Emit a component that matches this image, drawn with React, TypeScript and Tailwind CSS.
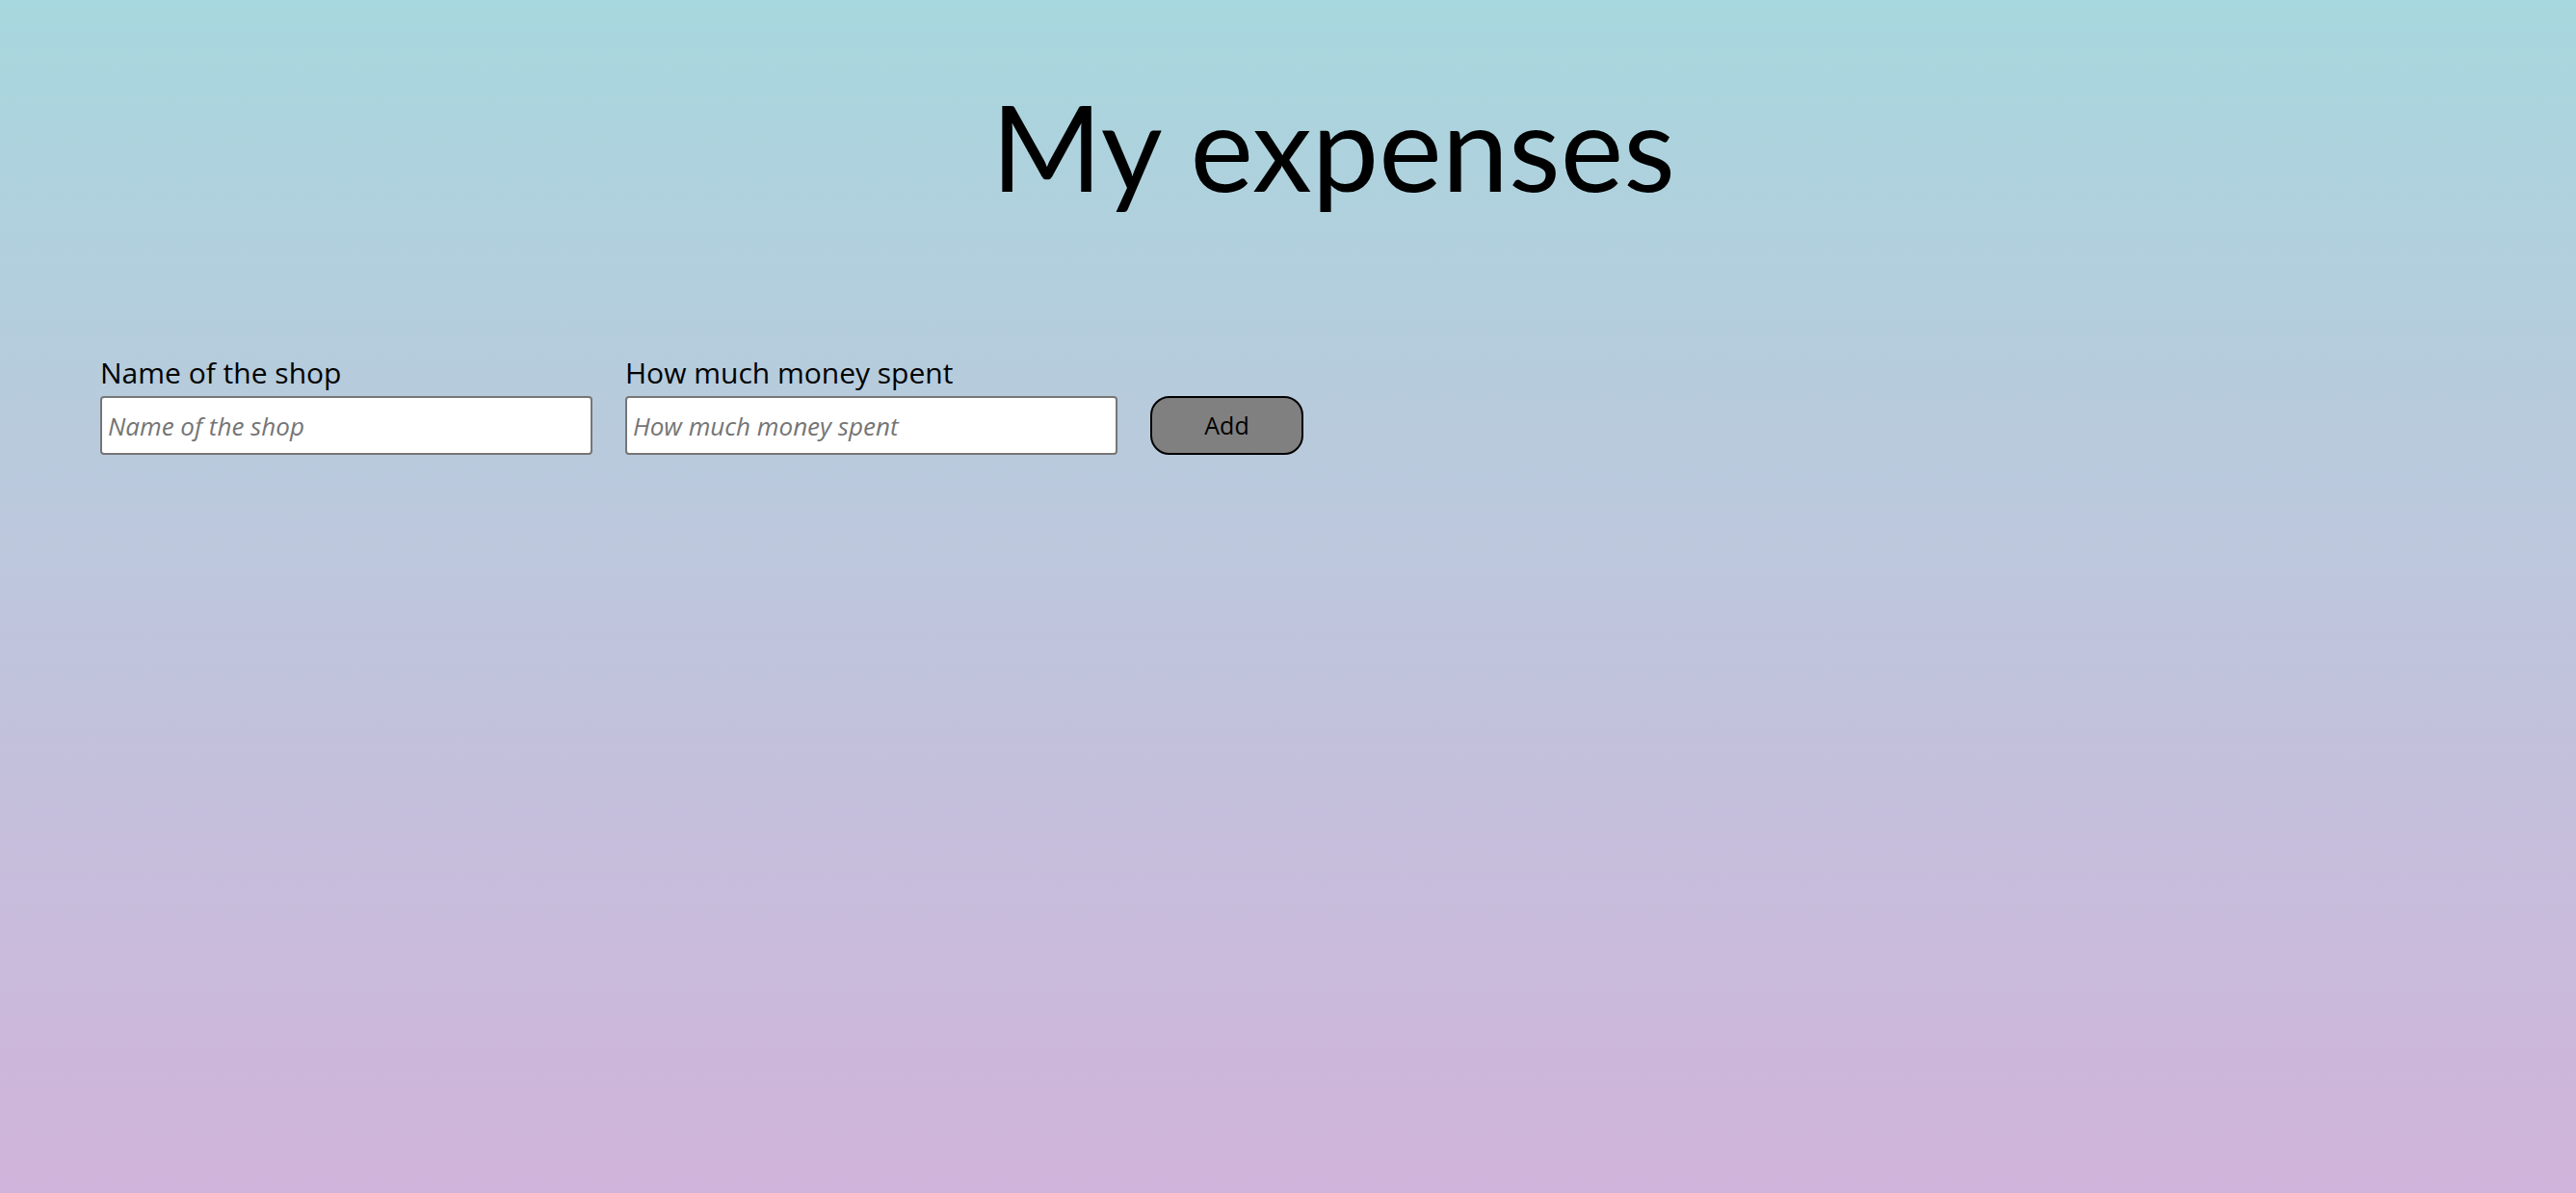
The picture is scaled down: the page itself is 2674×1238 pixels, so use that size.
import { useState } from "react";

export default function App() {
  const [shop, setShop] = useState("");
  const [amount, setAmount] = useState("");

  return (
    <div
      className="min-h-screen bg-gradient-to-b from-[#a7d7de] to-[#d0b3da] pt-[89px] text-black"
      style={{ fontFamily: "'Open Sans', 'Noto Sans', sans-serif" }}
    >
      <h1
        className="text-center text-[124px] leading-none font-normal mb-[155px] pl-[94px]"
        style={{ fontFamily: "Lato, sans-serif" }}
      >
        My expenses
      </h1>

      <form className="flex items-end gap-[34px] pl-[104px]" onSubmit={(e) => e.preventDefault()}>
        <div className="flex flex-col">
          <label className="text-[30px] leading-[38px] mb-[5px]">Name of the shop</label>
          <input
            value={shop}
            onChange={(e) => setShop(e.target.value)}
            placeholder="Name of the shop"
            className="w-[511px] h-[61px] bg-white border-2 border-[#767676] rounded-[4px] px-[6px] text-[26px] placeholder:italic placeholder:text-[#757575] outline-none"
          />
        </div>
        <div className="flex flex-col">
          <label className="text-[30px] leading-[38px] mb-[5px]">How much money spent</label>
          <input
            value={amount}
            onChange={(e) => setAmount(e.target.value)}
            placeholder="How much money spent"
            className="w-[511px] h-[61px] bg-white border-2 border-[#767676] rounded-[4px] px-[6px] text-[26px] placeholder:italic placeholder:text-[#757575] outline-none"
          />
        </div>
        <button
          type="submit"
          className="w-[159px] h-[61px] bg-[#808080] border-2 border-black rounded-[20px] text-[25px]"
        >
          Add
        </button>
      </form>
    </div>
  );
}
